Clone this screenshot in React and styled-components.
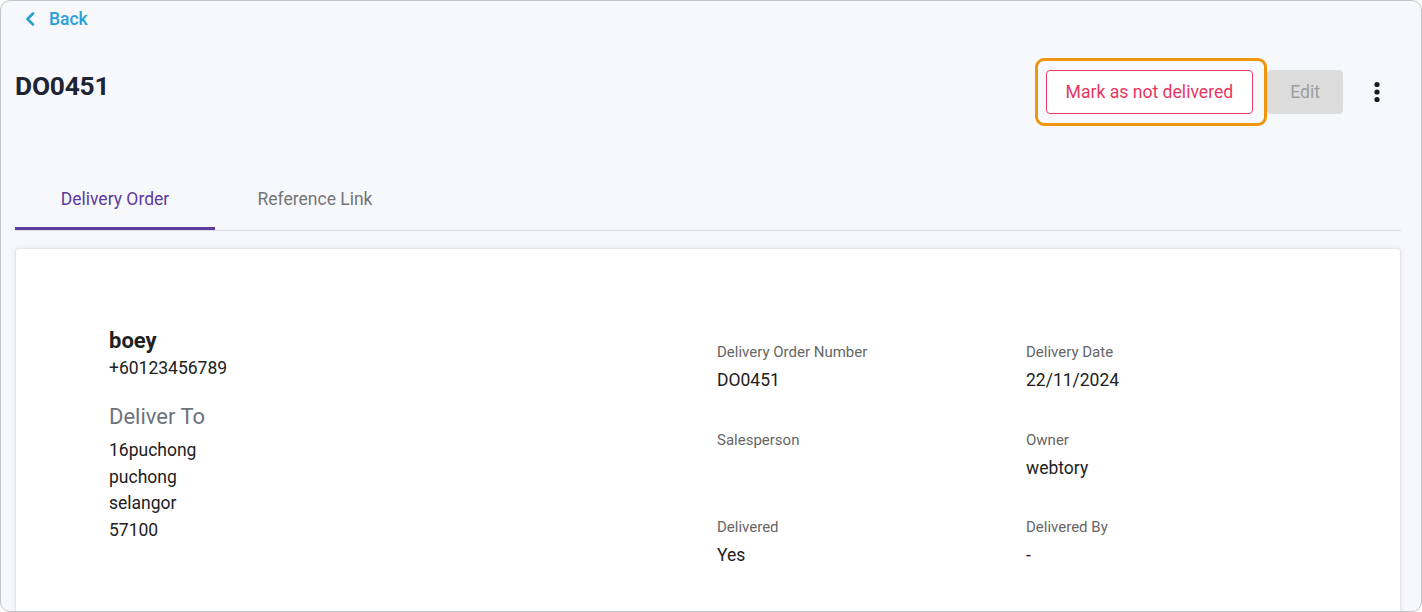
import React from "react";
import styled, { createGlobalStyle } from "styled-components";

const Global = createGlobalStyle`
  html, body { margin: 0; padding: 0; background: #ffffff; }
  body { font-family: Roboto, "Noto Sans", Arial, sans-serif; }
  * { box-sizing: border-box; }
`;

const Frame = styled.div`
  width: 1422px;
  height: 612px;
  border: 1px solid #c4c5cc;
  border-radius: 10px;
  overflow: hidden;
  background: #f7f8fc;
  padding: 0 20px 0 14px;
`;

const BackRow = styled.div`
  height: 36px;
  display: flex;
  align-items: center;
  gap: 14px;
  padding-left: 10px;
  color: #2a9fd8;
  font-size: 17.5px;
  font-weight: 500;
`;

const Header = styled.div`
  margin-top: 33px;
  display: flex;
  align-items: flex-start;
  justify-content: space-between;
`;

const Title = styled.h1`
  margin: 0;
  font-size: 26.3px;
  line-height: 32px;
  font-weight: 700;
  color: #1d2433;
  letter-spacing: -0.2px;
`;

const Actions = styled.div`
  display: flex;
  align-items: center;
  height: 44px;
  margin-right: 4px;
`;

const Highlight = styled.div`
  position: relative;
  margin-right: 14px;
  &::after {
    content: "";
    position: absolute;
    top: -12px;
    bottom: -12px;
    left: -11px;
    right: -14px;
    border: 3px solid #f0960f;
    border-radius: 9px;
    pointer-events: none;
  }
`;

const Button = styled.button`
  height: 44px;
  padding: 0 ${(p) => p.$pad || 19}px;
  border-radius: 4px;
  font-family: Roboto, Arial, sans-serif;
  font-size: 17.6px;
  cursor: pointer;
  border: 1px solid ${(p) => (p.$variant === "danger" ? "#ec3b65" : "transparent")};
  background: ${(p) => (p.$variant === "danger" ? "#ffffff" : "#dcdcdc")};
  color: ${(p) => (p.$variant === "danger" ? "#e8365f" : "#9e9e9e")};
`;

const IconButton = styled.button`
  width: 40px;
  height: 44px;
  margin-left: 14px;
  border: none;
  background: transparent;
  display: flex;
  align-items: center;
  justify-content: center;
  padding: 0;
`;

const Tabs = styled.div`
  margin-top: 56px;
  display: flex;
  border-bottom: 1px solid #dcdde2;
`;

const Tab = styled.div`
  width: 200px;
  height: 60px;
  display: flex;
  align-items: center;
  justify-content: center;
  font-size: 17.5px;
  color: ${(p) => (p.$active ? "#5c3b9c" : "#757575")};
  border-bottom: 3px solid ${(p) => (p.$active ? "#5c3b9c" : "transparent")};
`;

const Card = styled.div`
  margin-top: 17px;
  height: 420px;
  background: #ffffff;
  border: 1px solid #e4e4e8;
  border-radius: 4px;
  box-shadow: 0 0 5px rgba(0, 0, 0, 0.08);
  padding: 77px 0 0 93px;
  display: grid;
  grid-template-columns: 608px 309px 1fr;
  align-content: start;
`;

const Contact = styled.div`
  display: flex;
  flex-direction: column;
  color: #212121;
`;

const Name = styled.div`
  font-size: 22px;
  line-height: 30px;
  font-weight: 700;
`;

const Text = styled.div`
  font-size: 17.5px;
  line-height: ${(p) => p.$lh || 25}px;
`;

const SectionTitle = styled.div`
  margin-top: 22px;
  margin-bottom: 6px;
  font-size: 22px;
  line-height: 28px;
  color: #6c737d;
`;

const FieldCol = styled.div`
  display: flex;
  flex-direction: column;
  padding-top: 16px;
`;

const Field = styled.div`
  display: flex;
  flex-direction: column;
  margin-bottom: 37.5px;
`;

const Label = styled.div`
  font-size: 15px;
  line-height: 20px;
  color: #666666;
  margin-bottom: 6px;
`;

const Value = styled.div`
  font-size: 17.5px;
  line-height: 24px;
  min-height: 24px;
  color: #212121;
`;

const ChevronLeft = () => (
  <svg width="10" height="14" viewBox="0 0 10 14" fill="none">
    <path d="M8 1.5L2.5 7L8 12.5" stroke="#2a9fd8" strokeWidth="2.6" strokeLinecap="round" strokeLinejoin="round" />
  </svg>
);

const MoreVert = () => (
  <svg width="8" height="24" viewBox="0 0 8 24">
    <circle cx="4" cy="4.5" r="2.6" fill="#1a1a1a" />
    <circle cx="4" cy="12" r="2.6" fill="#1a1a1a" />
    <circle cx="4" cy="19.5" r="2.6" fill="#1a1a1a" />
  </svg>
);

const col1 = [
  { label: "Delivery Order Number", value: "DO0451" },
  { label: "Salesperson", value: "" },
  { label: "Delivered", value: "Yes" },
];
const col2 = [
  { label: "Delivery Date", value: "22/11/2024" },
  { label: "Owner", value: "webtory" },
  { label: "Delivered By", value: "-" },
];

export default function App() {
  return (
    <>
      <Global />
      <Frame>
        <BackRow>
          <ChevronLeft />
          <span>Back</span>
        </BackRow>
        <Header>
          <Title>DO0451</Title>
          <Actions>
            <Highlight>
              <Button $variant="danger">Mark as not delivered</Button>
            </Highlight>
            <Button $pad={22}>Edit</Button>
            <IconButton aria-label="More">
              <MoreVert />
            </IconButton>
          </Actions>
        </Header>
        <Tabs>
          <Tab $active>Delivery Order</Tab>
          <Tab>Reference Link</Tab>
        </Tabs>
        <Card>
          <Contact>
            <Name>boey</Name>
            <Text>+60123456789</Text>
            <SectionTitle>Deliver To</SectionTitle>
            <Text $lh={26.5}>16puchong</Text>
            <Text $lh={26.5}>puchong</Text>
            <Text $lh={26.5}>selangor</Text>
            <Text $lh={26.5}>57100</Text>
          </Contact>
          <FieldCol>
            {col1.map((f) => (
              <Field key={f.label}>
                <Label>{f.label}</Label>
                <Value>{f.value}</Value>
              </Field>
            ))}
          </FieldCol>
          <FieldCol>
            {col2.map((f) => (
              <Field key={f.label}>
                <Label>{f.label}</Label>
                <Value>{f.value}</Value>
              </Field>
            ))}
          </FieldCol>
        </Card>
      </Frame>
    </>
  );
}
